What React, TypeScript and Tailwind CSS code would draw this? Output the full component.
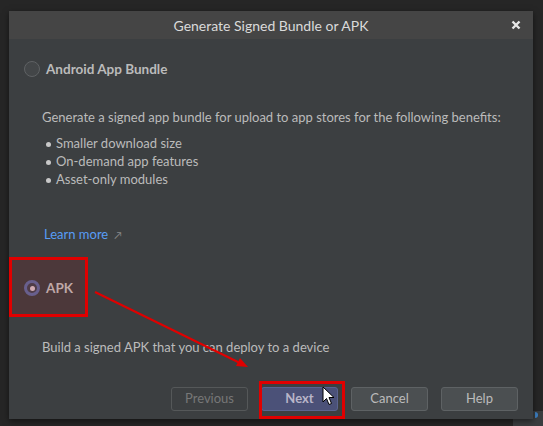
import React from "react";

const font = { fontFamily: "Lato, 'Noto Sans', sans-serif" };

function Radio({ checked }: { checked?: boolean }) {
  if (checked) {
    return (
      <span className="flex h-[16px] w-[16px] items-center justify-center rounded-full border-[3px] border-[#5b6a9e] bg-[#3f4350]">
        <span className="h-[5px] w-[5px] rounded-full bg-[#d0c0c8]" />
      </span>
    );
  }
  return <span className="h-[16px] w-[16px] rounded-full border border-[#5f6264] bg-[#434648]" />;
}

export default function App() {
  const benefits = ["Smaller download size", "On-demand app features", "Asset-only modules"];

  return (
    <div className="relative h-[426px] w-[543px] overflow-hidden bg-[#262626] pl-[9px] pt-[11px]" style={font}>
      {/* window peeking out behind the dialog */}
      <div className="absolute left-[513px] top-[411px] h-[20px] w-[40px] bg-[#3a3d3f]">
        <span className="absolute left-[22px] top-[1px] h-[6px] w-[3px] rounded-r-full bg-[#3d7fc0]" />
      </div>

      <div className="relative z-10 flex h-[408px] w-[524px] flex-col bg-[#3c3f41] shadow-[0_2px_6px_rgba(0,0,0,0.5)]">
        {/* Title bar */}
        <div className="relative flex h-[28px] items-center justify-center bg-[#454545]">
          <span className="text-[14px] text-[#dadada]">Generate Signed Bundle or APK</span>
          <svg className="absolute right-[12px] top-[9px]" width="10" height="10" viewBox="0 0 10 10">
            <path d="M1.5 1.5 L8.5 8.5 M8.5 1.5 L1.5 8.5" stroke="#e8e8e8" strokeWidth="2.4" />
          </svg>
        </div>

        {/* Body */}
        <div className="flex flex-1 flex-col pl-[15px] pr-[15px] pt-[22px] text-[13px] text-[#bbbbbb]">
          <div className="flex h-[16px] items-center gap-[6px]">
            <Radio />
            <span className="text-[13.5px] font-bold">Android App Bundle</span>
          </div>

          <p className="ml-[18px] mt-[31px] leading-[18px]">
            Generate a signed app bundle for upload to app stores for the following benefits:
          </p>
          <ul className="ml-[22px] mt-[9px]">
            {benefits.map((b) => (
              <li key={b} className="flex h-[18px] items-center gap-[5px]">
                <span className="h-[5px] w-[5px] rounded-full bg-[#c8c8c8]" />
                {b}
              </li>
            ))}
          </ul>

          <div className="ml-[20px] mt-[37px] flex h-[18px] items-center gap-[6px]">
            <span className="text-[#589df6]">Learn more</span>
            <span className="text-[10px] text-[#8a8a8a]">↗</span>
          </div>

          <div className="mt-[36px] flex h-[16px] items-center gap-[6px]">
            <Radio checked />
            <span className="text-[13.5px] font-bold">APK</span>
          </div>

          <p className="ml-[18px] mt-[42px] leading-[18px]">Build a signed APK that you can deploy to a device</p>

          <div className="mt-[31px] flex justify-end gap-[13px]">
            <button className="h-[24px] w-[77px] rounded-[3px] border border-[#555859] text-[#777777]">Previous</button>
            <button className="h-[24px] w-[77px] rounded-[3px] border border-[#5a6390] bg-[#4b5178] font-bold text-[#b8b5c8]">Next</button>
            <button className="h-[24px] w-[77px] rounded-[3px] border border-[#5e6264] bg-[#4b4f51] text-[#bbbbbb]">Cancel</button>
            <button className="h-[24px] w-[77px] rounded-[3px] border border-[#5e6264] bg-[#4b4f51] text-[#bbbbbb]">Help</button>
          </div>
        </div>
      </div>

      {/* Annotations */}
      <div className="absolute left-[9px] top-[257px] z-20 h-[60px] w-[79px] border-[3px] border-[#e00000] bg-[rgba(230,0,0,0.1)]" />
      <div className="absolute left-[259px] top-[381px] z-20 h-[38px] w-[86px] border-[3px] border-[#e00000]" />
      <svg className="absolute left-0 top-0 z-20" width="543" height="426">
        <line x1="95" y1="292" x2="240" y2="363" stroke="#e00000" strokeWidth="2" />
        <polygon points="248,367 236,366 240,358" fill="#e00000" />
      </svg>
      {/* cursor */}
      <svg className="absolute left-[322px] top-[386px] z-30" width="14" height="20" viewBox="0 0 14 20">
        <path d="M1 1 L1 16 L4.5 12.5 L7 18.5 L9.5 17.5 L7 11.5 L12 11.5 Z" fill="#ffffff" stroke="#000000" strokeWidth="1" strokeLinejoin="round" />
      </svg>
    </div>
  );
}
